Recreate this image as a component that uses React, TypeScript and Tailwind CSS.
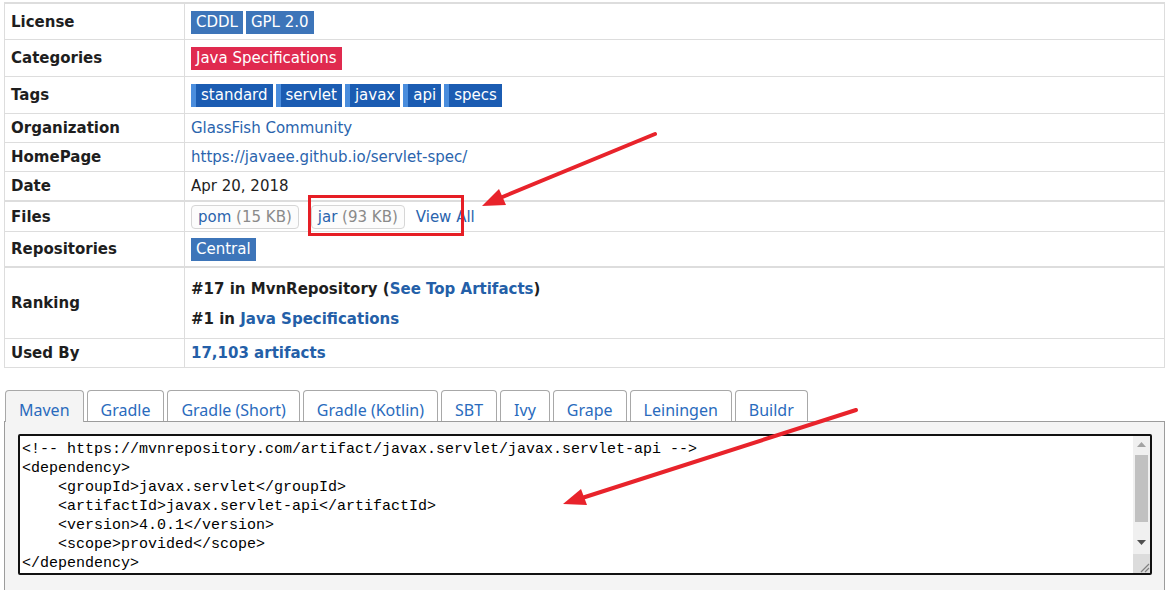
import React from "react";

const Row = ({
  label,
  h,
  thick,
  children,
}: {
  label: string;
  h: string;
  thick?: boolean;
  children: React.ReactNode;
}) => (
  <div className={`flex ${h} ${thick ? "border-b-2" : "border-b"} border-[#dddddd]`}>
    <div className="w-[180px] shrink-0 border-r border-[#dddddd] pl-[6px] pt-[1px] flex items-center font-bold text-[#1e1e1e]">
      {label}
    </div>
    <div className="flex-1 pl-[6px] pt-[1px] flex items-center text-[#1e1e1e]">{children}</div>
  </div>
);

const LicBadge = ({ children }: { children: React.ReactNode }) => (
  <span className="h-[23px] leading-[23px] px-[5px] bg-[#3d75b9] text-white">{children}</span>
);

const Tag = ({ children }: { children: React.ReactNode }) => (
  <span className="flex h-[23px] leading-[23px] bg-[#1b5cb2] text-white">
    <span className="w-[5px] bg-[#4a8ddd]" />
    <span className="pl-[5px] pr-[5px]">{children}</span>
  </span>
);

const FileBtn = ({ a, b }: { a: string; b: string }) => (
  <span className="h-[24px] leading-[22px] px-[6px] border border-[#d6d6d6] rounded-[4px] bg-[#fcfcfc]">
    <span className="text-[#2a64ad]">{a}</span>
    <span className="text-[#8a8a8a]"> {b}</span>
  </span>
);

const tabs = ["Maven", "Gradle", "Gradle (Short)", "Gradle (Kotlin)", "SBT", "Ivy", "Grape", "Leiningen", "Buildr"];

const code = [
  "<!-- https://mvnrepository.com/artifact/javax.servlet/javax.servlet-api -->",
  "<dependency>",
  "    <groupId>javax.servlet</groupId>",
  "    <artifactId>javax.servlet-api</artifactId>",
  "    <version>4.0.1</version>",
  "    <scope>provided</scope>",
  "</dependency>",
];

export default function App() {
  return (
    <div
      className="relative w-[1171px] h-[590px] overflow-hidden bg-white text-[15px]"
      style={{ fontFamily: '"DejaVu Sans", Verdana, sans-serif' }}
    >
      <div className="pt-[2px] pl-[4px]">
        <div className="w-[1161px] border-x border-t-2 border-[#dddddd]">
          <Row label="License" h="h-[36px]">
            <div className="flex gap-[3px]">
              <LicBadge>CDDL</LicBadge>
              <LicBadge>GPL 2.0</LicBadge>
            </div>
          </Row>
          <Row label="Categories" h="h-[37px]">
            <span className="h-[23px] leading-[23px] px-[5px] bg-[#e02a4f] text-white">Java Specifications</span>
          </Row>
          <Row label="Tags" h="h-[37px]">
            <div className="flex gap-[3px]">
              <Tag>standard</Tag>
              <Tag>servlet</Tag>
              <Tag>javax</Tag>
              <Tag>api</Tag>
              <Tag>specs</Tag>
            </div>
          </Row>
          <Row label="Organization" h="h-[29px]">
            <span className="text-[#2a64ad]">GlassFish Community</span>
          </Row>
          <Row label="HomePage" h="h-[29px]">
            <span className="text-[#2a64ad]">https://javaee.github.io/servlet-spec/</span>
          </Row>
          <Row label="Date" h="h-[30px]" thick>
            <span>Apr 20, 2018</span>
          </Row>
          <Row label="Files" h="h-[30px]">
            <div className="flex items-center">
              <FileBtn a="pom" b="(15 KB)" />
              <span className="w-[12px]" />
              <FileBtn a="jar" b="(93 KB)" />
              <span className="ml-[11px] text-[#2a64ad]">View All</span>
            </div>
          </Row>
          <Row label="Repositories" h="h-[36px]" thick>
            <LicBadge>Central</LicBadge>
          </Row>
          <Row label="Ranking" h="h-[71px]">
            <div className="font-bold leading-[20px]">
              <p className="mb-[10px]">
                #17 in MvnRepository (<span className="text-[#245fa8]">See Top Artifacts</span>)
              </p>
              <p>
                #1 in <span className="text-[#245fa8]">Java Specifications</span>
              </p>
            </div>
          </Row>
          <Row label="Used By" h="h-[29px]">
            <span className="font-bold text-[#245fa8]">17,103 artifacts</span>
          </Row>
        </div>
      </div>

      <div className="mt-[22px] ml-[4px] w-[1161px]">
        <div className="flex items-end gap-[3px] pl-[1px] h-[31px]" style={{ fontFamily: '"Noto Sans", "Noto Sans CJK SC", sans-serif' }}>
          {tabs.map((t, i) =>
            i === 0 ? (
              <div
                key={t}
                className="relative z-10 -mb-[1px] h-[32px] px-[13px] pt-[8px] leading-[22px] border border-b-0 border-[#a8a8a8] rounded-t-[4px] bg-[#f4f4f4] text-[16px] text-[#2a6bbd]"
              >
                {t}
              </div>
            ) : (
              <div
                key={t}
                className="h-[31px] px-[13px] pt-[8px] leading-[22px] border border-b-0 border-[#a8a8a8] rounded-t-[4px] bg-white text-[16px] text-[#2a6bbd]"
              >
                {t}
              </div>
            )
          )}
        </div>
        <div className="border border-[#9c9c9c] bg-[#f4f4f4] pt-[12px] pl-[13px] pr-[12px] pb-[20px]">
          <div className="flex h-[141px] w-[1134px] border-2 border-[#111111] rounded-[2px] bg-white">
            <div
              className="flex-1 pl-[2px] pt-[4px] text-[15px] leading-[19px] text-black whitespace-pre"
              style={{ fontFamily: '"Liberation Mono", monospace' }}
            >
              {code.map((l, i) => (
                <div key={i}>{l}</div>
              ))}
            </div>
            <div className="w-[17px] flex flex-col bg-[#f0f0f0]">
              <div className="h-[17px] flex items-center justify-center">
                <svg width="9" height="5" viewBox="0 0 9 5">
                  <path d="M0 5 L4.5 0 L9 5 Z" fill="#a3a3a3" />
                </svg>
              </div>
              <div className="mx-[2px] mt-[2px] h-[67px] bg-[#c1c1c1]" />
              <div className="h-[17px] mt-[12px] flex items-center justify-center">
                <svg width="9" height="5" viewBox="0 0 9 5">
                  <path d="M0 0 L4.5 5 L9 0 Z" fill="#505050" />
                </svg>
              </div>
              <div className="flex-1" />
              <div className="h-[19px] bg-[#dcdcdc] flex items-end justify-end">
                <svg width="12" height="12" viewBox="0 0 12 12">
                  <path d="M11 3 L3 11 M11 7 L7 11" stroke="#808080" strokeWidth="1.2" />
                </svg>
              </div>
            </div>
          </div>
        </div>
      </div>

      <div className="absolute left-[308px] top-[195px] w-[156px] h-[41px] border-[3px] border-[#e61e25]" />

      <svg className="absolute inset-0 pointer-events-none" width="1171" height="590" viewBox="0 0 1171 590">
        <line x1="655" y1="134" x2="500" y2="198" stroke="#e8232b" strokeWidth="4" strokeLinecap="round" />
        <polygon points="482,206 506,205 499,189" fill="#e8232b" />
        <line x1="856" y1="410" x2="582" y2="498" stroke="#e8232b" strokeWidth="4" strokeLinecap="round" />
        <polygon points="563,504 587,505 581,489" fill="#e8232b" />
      </svg>
    </div>
  );
}
